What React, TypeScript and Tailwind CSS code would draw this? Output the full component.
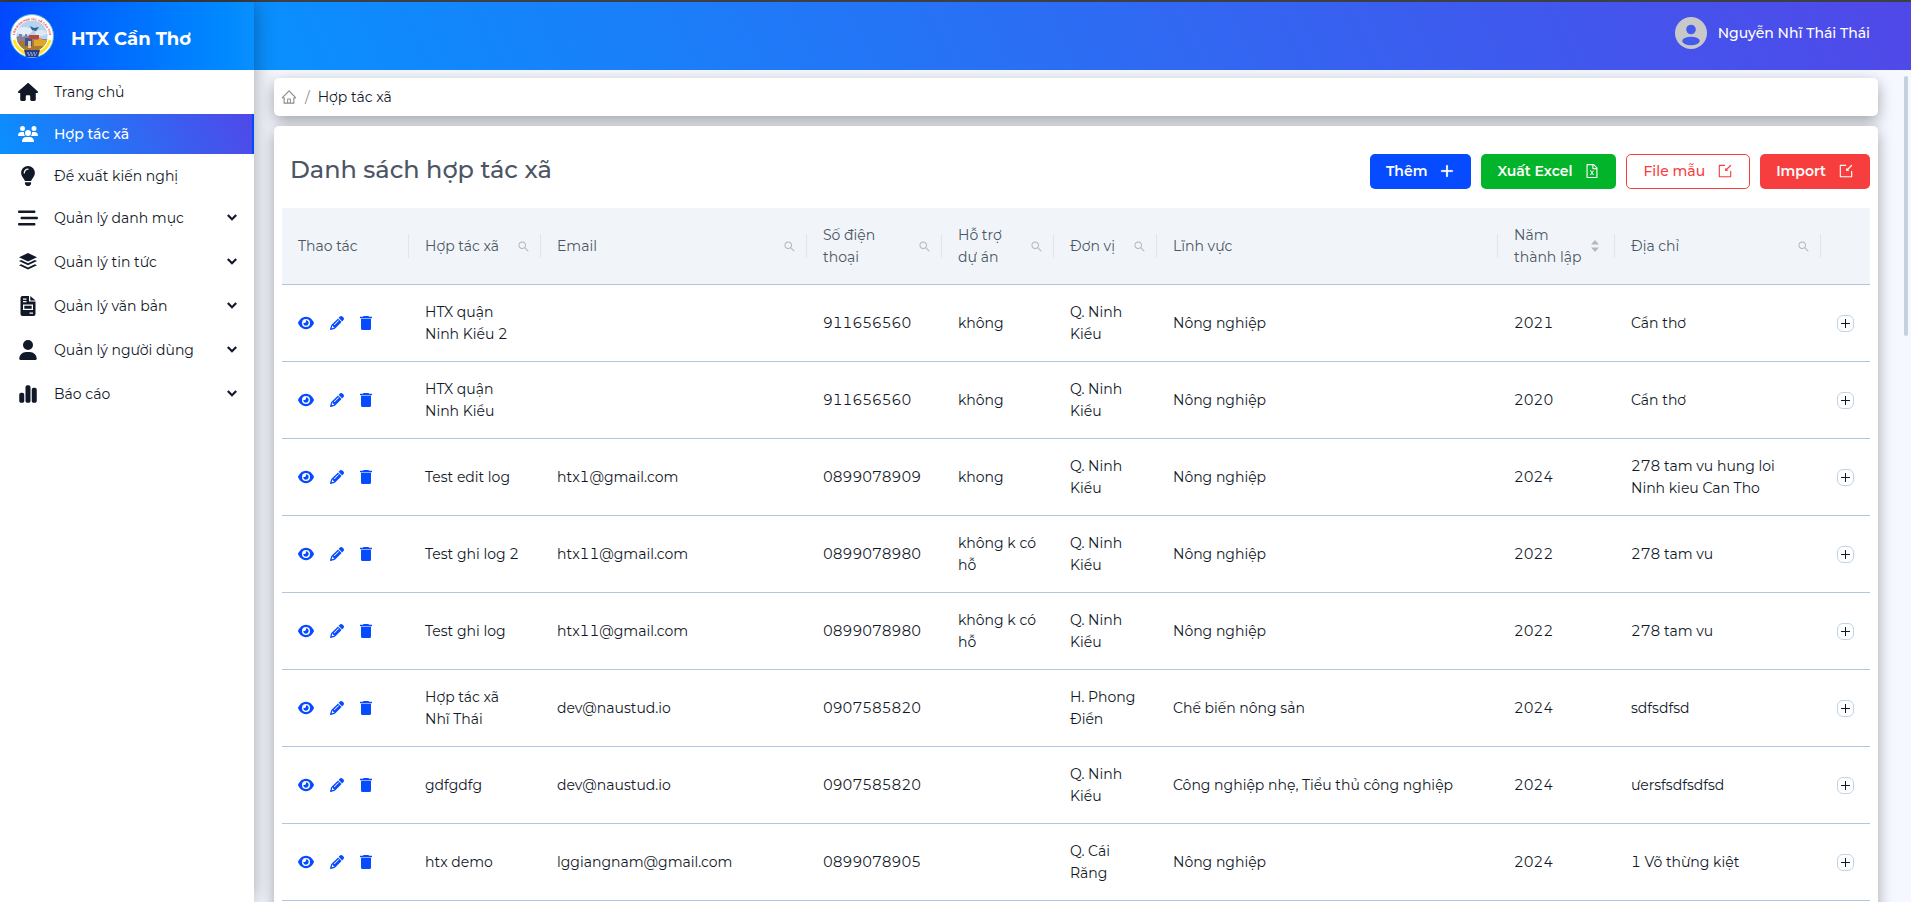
import React from 'react';
import { FaHouse, FaUsers, FaLightbulb, FaBarsStaggered, FaUser, FaChartSimple, FaEye, FaPencil } from 'react-icons/fa6';
import { AiOutlinePlus, AiOutlineFileExcel, AiOutlineImport, AiOutlineHome, AiOutlineSearch } from 'react-icons/ai';

const LayersIcon = () => (
  <svg viewBox="0 0 20 20" width="20" height="20" fill="currentColor">
    <path d="M10 1 19 5.300 10 9.600 1 5.300Z" />
    <path d="M1 8.900l2.200-1 6.800 3.300 6.800-3.300 2.200 1-9 4.300z" />
    <path d="M1 13.200l2.200-1 6.800 3.300 6.800-3.300 2.200 1-9 4.300z" />
  </svg>
);

const DocumentIcon = () => (
  <svg viewBox="0 0 20 20" width="20" height="20" fill="currentColor" fillRule="evenodd">
    <path d="M4.500 0H11v5.500h6.500V18a2 2 0 0 1-2 2h-11a2 2 0 0 1-2-2V2a2 2 0 0 1 2-2ZM5 2.500v1.200h3.500V2.500Zm0 2.500v1.200h3.500V5ZM5 8.500v5.500h10V8.500Zm1.300 1.300h7.400v2.900H6.300ZM11.500 16.500v1.200H15v-1.200Z" />
    <path d="M12.300 0 17.500 4.500h-5.200Z" />
  </svg>
);

const ChevronIcon = () => (
  <svg viewBox="0 0 10 10" width="10" height="10" fill="none" stroke="currentColor" strokeWidth="2.2">
    <path d="M.8 2 5 6.200 9.200 2" />
  </svg>
);

const TrashIcon = () => (
  <svg viewBox="1 0 12 14" width="12" height="14" fill="currentColor">
    <path d="M4.500 0h5l.5.700h3V2H1V.700h3Z" />
    <path d="M2 3h10v9.500a1.500 1.500 0 0 1-1.500 1.500h-7A1.500 1.500 0 0 1 2 12.500Z" />
    <path d="M1.500 2h11v1h-11Z" opacity=".45" />
  </svg>
);

const AvatarIcon = () => (
  <svg viewBox="0 0 32 32" width="32" height="32">
    <circle cx="16" cy="16" r="16" fill="#c8c8c8" />
    <circle cx="16" cy="12.500" r="4.800" fill="#445aee" />
    <ellipse cx="16" cy="24" rx="8.800" ry="4.200" fill="#445aee" />
  </svg>
);

const Logo = () => (
  <svg viewBox="0 0 44 44" width="44" height="44" role="img" aria-label="Logo">
    <defs>
      <path id="logo-arc" d="M5.300 29a17.500 17.500 0 1 1 33.400 0" />
      <clipPath id="logo-inner"><circle cx="22" cy="22" r="15.500" /></clipPath>
    </defs>
    <circle cx="22" cy="22" r="21.500" fill="#fff" stroke="#5fb3d9" strokeWidth="1" />
    <path d="M4 26a18.500 18.500 0 0 0 36 0" fill="none" stroke="#ffe21f" strokeWidth="3" />
    <text fontSize="3" fontWeight="700" fill="#e0303a" fontFamily="Liberation Sans, sans-serif">
      <textPath href="#logo-arc" startOffset="50%" textAnchor="middle">LIÊN MINH HỢP TÁC XÃ CẦN THƠ</textPath>
    </text>
    <g clipPath="url(#logo-inner)">
      <rect width="44" height="44" fill="#b5d2ee" />
      <ellipse cx="14" cy="17" rx="8" ry="4" fill="#e4eef8" />
      <ellipse cx="31" cy="19" rx="6" ry="3" fill="#dce9f5" />
      <path d="M6 26v-3l3-1v-2h3v3l3-1v-2h2v2h3v3h18v3H6Z" fill="#8a7f9e" />
      <path d="M6 27h32v12H6Z" fill="#a8782c" />
      <path d="M24 26h4v-2h4v2h5v6H24Z" fill="#e0a52c" />
      <path d="M15 24h7v8h-7Z" fill="#34589a" />
      <path d="M19 21h10v4H19Z" fill="#c2452f" />
      <path d="M18 27h3v7h-3Z" fill="#eac2a4" />
      <path d="M20 12l4 2 5-1-3 4-4-1Z" fill="#2c6585" />
    </g>
    <path d="M14 36h16l-2 7H16Z" fill="#263b8c" />
    <path d="M17 39h10M18 41h8" stroke="#c7cde8" strokeWidth="1" strokeDasharray="2 1" />
  </svg>
);

const menu = [
  { icon: <FaHouse size={20} />, label: 'Trang chủ' },
  { icon: <FaUsers size={20} />, label: 'Hợp tác xã', active: true },
  { icon: <FaLightbulb size={20} />, label: 'Đề xuất kiến nghị' },
  { icon: <FaBarsStaggered size={20} />, label: 'Quản lý danh mục', group: true },
  { icon: <LayersIcon />, label: 'Quản lý tin tức', group: true },
  { icon: <DocumentIcon />, label: 'Quản lý văn bản', group: true },
  { icon: <FaUser size={20} />, label: 'Quản lý người dùng', group: true },
  { icon: <FaChartSimple size={20} />, label: 'Báo cáo', group: true },
];

const columns = [
  { title: 'Thao tác', width: 'w-[127px]' },
  { title: 'Hợp tác xã', width: 'w-[132px]', search: true },
  { title: 'Email', width: 'w-[266px]', search: true },
  { title: 'Số điện thoại', width: 'w-[135px]', search: true },
  { title: 'Hỗ trợ dự án', width: 'w-[112px]', search: true },
  { title: 'Đơn vị', width: 'w-[103px]', search: true },
  { title: 'Lĩnh vực', width: '' },
  { title: 'Năm thành lập', width: 'w-[117px]', sort: true },
  { title: 'Địa chỉ', width: 'w-[206px]', search: true },
  { title: '', width: 'w-[49px]' },
];

const rows = [
  { name: 'HTX quận Ninh Kiều 2', email: '', phone: '911656560', support: 'không', unit: 'Q. Ninh Kiều', field: 'Nông nghiệp', year: 2021, address: 'Cần thơ' },
  { name: 'HTX quận Ninh Kiều', email: '', phone: '911656560', support: 'không', unit: 'Q. Ninh Kiều', field: 'Nông nghiệp', year: 2020, address: 'Cần thơ' },
  { name: 'Test edit log', email: 'htx1@gmail.com', phone: '0899078909', support: 'khong', unit: 'Q. Ninh Kiều', field: 'Nông nghiệp', year: 2024, address: '278 tam vu hung loi Ninh kieu Can Tho' },
  { name: 'Test ghi log 2', email: 'htx11@gmail.com', phone: '0899078980', support: 'không k có hỗ', unit: 'Q. Ninh Kiều', field: 'Nông nghiệp', year: 2022, address: '278 tam vu' },
  { name: 'Test ghi log', email: 'htx11@gmail.com', phone: '0899078980', support: 'không k có hỗ', unit: 'Q. Ninh Kiều', field: 'Nông nghiệp', year: 2022, address: '278 tam vu' },
  { name: 'Hợp tác xã Nhĩ Thái', email: 'dev@naustud.io', phone: '0907585820', support: '', unit: 'H. Phong Điền', field: 'Chế biến nông sản', year: 2024, address: 'sdfsdfsd' },
  { name: 'gdfgdfg', email: 'dev@naustud.io', phone: '0907585820', support: '', unit: 'Q. Ninh Kiều', field: 'Công nghiệp nhẹ, Tiểu thủ công nghiệp', year: 2024, address: 'ưersfsdfsdfsd' },
  { name: 'htx demo', email: 'lggiangnam@gmail.com', phone: '0899078905', support: '', unit: 'Q. Cái Răng', field: 'Nông nghiệp', year: 2024, address: '1 Võ thừng kiệt' },
];

const Sidebar = () => (
  <aside className="relative z-10 flex w-[254px] shrink-0 flex-col bg-white shadow-[0_0_20px_rgba(0,0,0,0.35)]">
    <div className="flex h-[68px] shrink-0 items-center gap-[17px] bg-gradient-to-r from-[#0447ff] to-[#0990ff] px-[10px] text-white">
      <Logo />
      <span className="pt-[6px] text-lg font-bold">HTX Cần Thơ</span>
    </div>
    <nav className="flex flex-col gap-[2px] pt-[2px]">
      {menu.map((item) => (
        <a
          key={item.label}
          href="#"
          className={
            item.active
              ? 'flex h-10 items-center gap-4 border-r-2 border-[#0648ff] bg-linear-[65deg,#0990ff,#5048e8] pl-[18px] font-medium text-white'
              : item.group
                ? 'mb-[2px] flex h-10 items-center gap-4 pr-[17px] pl-[18px]'
                : 'flex h-10 items-center gap-4 pl-[18px]'
          }
        >
          {item.icon}
          <span className="flex-1">{item.label}</span>
          {item.group && <ChevronIcon />}
        </a>
      ))}
    </nav>
  </aside>
);

const TableHead = () => (
  <thead>
    <tr>
      {columns.map((col, i) => (
        <th key={i} scope="col" className={`relative h-[77px] border-b border-[#adc8e0] bg-[#f1f5fa] px-4 text-left font-normal text-[#4b5563] ${col.width}`}>
          <div className="flex items-center justify-between">
            <span>{col.title}</span>
            {col.search && (
              <button type="button" aria-label={`Tìm ${col.title}`} className="-mr-[5px] ml-2 shrink-0 text-[#b3b5b8]">
                <AiOutlineSearch size={13} />
              </button>
            )}
            {col.sort && (
              <button type="button" aria-label={`Sắp xếp ${col.title}`} className="shrink-0 text-[#b5b8bc]">
                <svg viewBox="0 0 8 12" width="8" height="12" fill="currentColor">
                  <path d="M4 0 8 4.500H0ZM4 12 0 7.500h8Z" />
                </svg>
              </button>
            )}
          </div>
          {i < columns.length - 1 && <span className="absolute top-1/2 right-0 h-[23px] w-px -translate-y-1/2 bg-[#e1e5ea]" />}
        </th>
      ))}
    </tr>
  </thead>
);

export default function App() {
  return (
    <div className="flex h-screen flex-col overflow-hidden bg-[#f5f9ff] font-['Montserrat','Inter',sans-serif] text-sm leading-[22px] text-[#111827]">
      <div className="h-[2px] shrink-0 bg-[#3c4043]" />
      <div className="flex min-h-0 flex-1">
        <Sidebar />

        <div className="flex min-w-0 flex-1 flex-col">
          <header className="flex h-[68px] shrink-0 items-center justify-end bg-linear-[65deg,#0990ff,#5048e8] pr-[41px] pb-[7px]">
            <button type="button" className="flex items-center gap-[11px] font-medium text-white">
              <AvatarIcon />
              <span>Nguyễn Nhĩ Thái Thái</span>
            </button>
          </header>

          <div className="flex min-h-0 flex-1">
            <main className="min-w-0 flex-1 overflow-hidden pt-2 pr-[26px] pl-5">
              {/* Breadcrumb */}
              <nav aria-label="Breadcrumb" className="flex h-[38px] items-center gap-2 rounded-[5px] bg-white px-[7px] shadow-[0_5px_15px_rgba(0,0,0,0.35)]">
                <a href="#" aria-label="Trang chủ" className="text-[#8c8c8c]"><AiOutlineHome size={16} /></a>
                <span className="text-[#8c8c8c]">/</span>
                <span>Hợp tác xã</span>
              </nav>

              {/* List */}
              <section className="mt-[10px] rounded-[5px] bg-white px-2 pt-7 pb-4 shadow-[0_5px_15px_rgba(0,0,0,0.35)]">
                <div className="flex items-start justify-between pb-[19px] pl-2">
                  <h1 className="text-2xl font-medium text-[#4b5563]">Danh sách hợp tác xã</h1>
                  <div className="flex gap-[10px] font-semibold text-white">
                    <button type="button" className="flex h-[35px] items-center gap-3 rounded-[5px] bg-[#064bff] px-4 pb-px">
                      Thêm <AiOutlinePlus size={16} stroke="currentColor" strokeWidth={50} />
                    </button>
                    <button type="button" className="flex h-[35px] items-center gap-3 rounded-[5px] bg-[#02b429] px-4 pb-px">
                      Xuất Excel <AiOutlineFileExcel size={16} />
                    </button>
                    <button type="button" className="flex h-[35px] items-center gap-3 rounded-[5px] border border-[#f73e3e] bg-white px-4 pb-px font-medium text-[#f73e3e]">
                      File mẫu <AiOutlineImport size={16} />
                    </button>
                    <button type="button" className="flex h-[35px] items-center gap-3 rounded-[5px] bg-[#f73e3e] px-4 pb-px">
                      Import <AiOutlineImport size={16} />
                    </button>
                  </div>
                </div>

                <table className="w-full table-fixed border-separate border-spacing-0 tabular-nums">
                  <TableHead />
                  <tbody className="[&_td]:h-[77px] [&_td]:border-b [&_td]:border-[#adc8e0] [&_td]:px-4">
                    {rows.map((row, i) => (
                      <tr key={i}>
                        <td>
                          <div className="flex items-center gap-4 text-[#064bff]">
                            <button type="button" aria-label="Xem"><FaEye size={16} /></button>
                            <button type="button" aria-label="Sửa"><FaPencil size={14} /></button>
                            <button type="button" aria-label="Xóa"><TrashIcon /></button>
                          </div>
                        </td>
                        <td>{row.name}</td>
                        <td>{row.email}</td>
                        <td>{row.phone}</td>
                        <td>{row.support}</td>
                        <td>{row.unit}</td>
                        <td>{row.field}</td>
                        <td>{row.year}</td>
                        <td>{row.address}</td>
                        <td>
                          <button type="button" aria-label="Mở rộng" className="flex size-[17px] items-center justify-center rounded-md border border-[#bfd3ea]">
                            <svg viewBox="0 0 9 9" width="9" height="9" stroke="currentColor">
                              <path d="M4.500 0v9M0 4.500h9" />
                            </svg>
                          </button>
                        </td>
                      </tr>
                    ))}
                  </tbody>
                </table>
              </section>
            </main>
            <div className="w-[7px] shrink-0 pt-[6px] pr-[3px]">
              <div className="h-[260px] rounded-full bg-[#c4d2e0]" />
            </div>
          </div>
        </div>
      </div>
    </div>
  );
}
